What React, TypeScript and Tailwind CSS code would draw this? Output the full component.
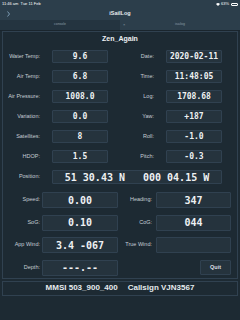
import React from "react";

const boxBase =
  "flex items-center justify-center bg-[#25333d] border border-[#304150] rounded-[1px] font-['DejaVu_Sans_Mono',monospace] font-bold text-[#eef1f3]";
const labelBase =
  "text-right text-[5.5px] leading-none text-[#c5cdd3] font-['Liberation_Sans',Arial,sans-serif]";

function TopRow({ l1, v1, l2, v2 }: { l1: string; v1: string; l2: string; v2: string }) {
  return (
    <div className="flex h-[13px] items-center">
      <div className={`w-[37px] ${labelBase}`}>{l1}</div>
      <div className={`ml-[12px] h-full w-[56px] text-[8px] ${boxBase}`}>{v1}</div>
      <div className={`w-[46px] ${labelBase}`}>{l2}</div>
      <div className={`ml-[12px] h-full w-[56px] text-[8px] ${boxBase}`}>{v2}</div>
    </div>
  );
}

function BottomRow({
  l1,
  v1,
  l2,
  v2,
  quit,
}: {
  l1: string;
  v1: string;
  l2?: string;
  v2?: string;
  quit?: boolean;
}) {
  return (
    <div className="flex h-[16px] items-center">
      <div className={`w-[37px] ${labelBase}`}>{l1}</div>
      <div className={`ml-[2px] h-full w-[76px] text-[10px] ${boxBase}`}>{v1}</div>
      {quit ? (
        <div className="flex h-full w-[113px] justify-end">
          <div className="flex h-[15px] w-[31px] items-center justify-center rounded-[1px] border border-[#304150] bg-[#25333d] text-[5.5px] font-bold text-[#d8dee2] font-['Liberation_Sans',Arial,sans-serif]">
            Quit
          </div>
        </div>
      ) : (
        <>
          <div className={`w-[34px] ${labelBase}`}>{l2}</div>
          <div className={`ml-[4px] h-full w-[75px] text-[10px] ${boxBase}`}>{v2}</div>
        </>
      )}
    </div>
  );
}

export default function App() {
  return (
    <div className="flex h-[320px] w-[240px] flex-col overflow-hidden bg-[#1d2a33] font-['Liberation_Sans',Arial,sans-serif]">
      {/* status bar */}
      <div className="flex h-[8px] items-center justify-between bg-[#2c3e4b] px-[2px] text-[4px] leading-none text-white">
        <span>11:46 am&nbsp;&nbsp;Tue 11 Feb</span>
        <div className="flex items-center gap-[1px]">
          <svg width="4" height="3" viewBox="0 0 8 6">
            <path d="M4 6 L0 2 A6 6 0 0 1 8 2 Z" fill="white" />
          </svg>
          <span>63%</span>
          <div className="ml-[1px] flex h-[3px] w-[7px] items-center rounded-[1px] border-[0.5px] border-white p-[0.5px]">
            <div className="h-full w-[4px] bg-white" />
          </div>
        </div>
      </div>
      {/* nav bar */}
      <div className="relative flex h-[12px] items-center justify-center bg-[#2c3e4b]">
        <svg className="absolute left-[7px] top-[3px]" width="3" height="6" viewBox="0 0 3 6">
          <path d="M0.5 0.5 L2.5 3 L0.5 5.5" stroke="#9fc3e0" strokeWidth="0.7" fill="none" />
        </svg>
        <span className="text-[5.5px] font-bold leading-none text-[#e6ebee]">iSailLog</span>
      </div>
      {/* tabs */}
      <div className="flex h-[10px] text-[3.5px] leading-none text-[#8a9aa6]">
        <div className="flex w-[120px] items-center justify-center bg-[#243440]">console</div>
        <div className="relative flex w-[120px] items-center justify-center bg-[#2c3e4b]">
          <span className="absolute left-[3px] text-[4px]">×</span>
          isailog
        </div>
      </div>
      <div className="h-[1px] bg-[#1a252d]" />
      {/* main panel */}
      <div className="mx-[2px] flex flex-col border border-[#304150] pb-[2px]">
        <div className="flex h-[12px] items-center justify-center text-[7px] font-bold leading-none text-[#eef1f3]">
          Zen_Again
        </div>
        <div className="mt-[6px] flex flex-col gap-[7px]">
          <TopRow l1="Water Temp:" v1="9.6" l2="Date:" v2="2020-02-11" />
          <TopRow l1="Air Temp:" v1="6.8" l2="Time:" v2="11:48:05" />
          <TopRow l1="Air Pressure:" v1="1008.0" l2="Log:" v2="1708.68" />
          <TopRow l1="Variation:" v1="0.0" l2="Yaw:" v2="+187" />
          <TopRow l1="Satellites:" v1="8" l2="Roll:" v2="-1.0" />
          <TopRow l1="HDOP:" v1="1.5" l2="Pitch:" v2="-0.3" />
          <div className="flex h-[14px] items-center">
            <div className={`w-[37px] ${labelBase}`}>Position:</div>
            <div className={`ml-[12px] h-full w-[170px] gap-[18px] text-[10px] ${boxBase}`}>
              <span>51 30.43 N</span>
              <span>000 04.15 W</span>
            </div>
          </div>
        </div>
        <div className="mt-[8px] flex flex-col gap-[6.5px]">
          <BottomRow l1="Speed:" v1="0.00" l2="Heading:" v2="347" />
          <BottomRow l1="SoG:" v1="0.10" l2="CoG:" v2="044" />
          <BottomRow l1="App Wind:" v1="3.4 -067" l2="True Wind:" v2="" />
          <BottomRow l1="Depth:" v1="---.--" quit />
        </div>
      </div>
      {/* footer */}
      <div className="mx-[2px] mt-[2px] flex h-[15px] items-center justify-center gap-[10px] border border-[#304150] text-[8px] font-bold leading-none text-[#e6ebee]">
        <span>MMSI 503_900_400</span>
        <span>Callsign VJN3567</span>
      </div>
    </div>
  );
}
